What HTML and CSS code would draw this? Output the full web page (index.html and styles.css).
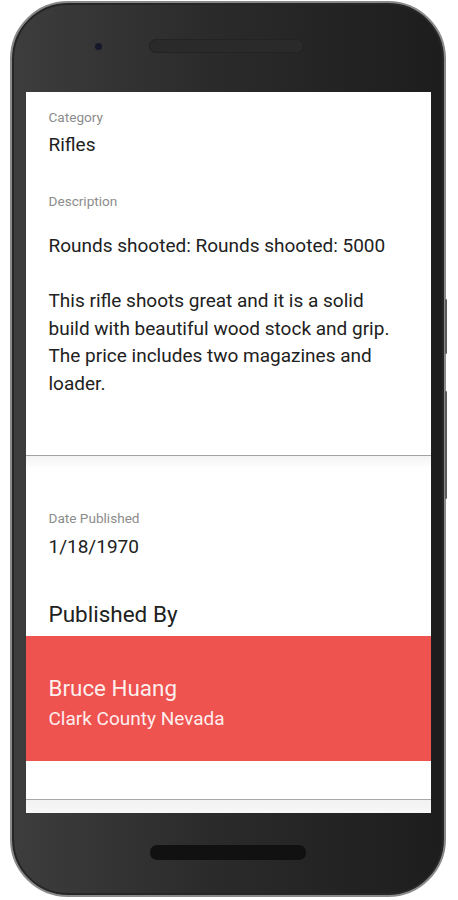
FILE: index.html
```html
<!DOCTYPE html>
<html lang="en">
<head>
    <meta charset="UTF-8">
    <meta name="viewport" content="width=device-width, initial-scale=1.0">
    <title>Listing Details</title>
    <link rel="stylesheet" href="styles.css">
</head>
<body>

    <div class="phone">
        <span class="side-key key-power"></span>
        <span class="side-key key-volume"></span>

        <div class="bezel bezel-top">
            <span class="camera"></span>
            <span class="speaker"></span>
        </div>

        <div class="screen">
            <div class="card card-details">
                <p class="label">Category</p>
                <p class="value">Rifles</p>

                <p class="label label-spaced">Description</p>
                <p class="description">Rounds shooted: Rounds shooted: 5000

This rifle shoots great and it is a solid build with beautiful wood stock and grip. The price includes two magazines and loader.</p>
            </div>

            <div class="card card-publish">
                <p class="label">Date Published</p>
                <p class="value value-date">1/18/1970</p>
                <h2 class="section-title">Published By</h2>
            </div>

            <!-- seller block -->
            <div class="seller">
                <p class="seller-name">Bruce Huang</p>
                <p class="seller-place">Clark County Nevada</p>
            </div>

            <div class="card-end"></div>
            <div class="card-next"></div>
        </div>

        <div class="bezel bezel-bottom">
            <span class="speaker speaker-bottom"></span>
        </div>
    </div>

</body>
</html>
```

FILE: styles.css
```css
body {
    margin: 0;
    background: white;
    font-family: Roboto, "Noto Sans", Arial, sans-serif;
}
p, h2 {
    margin: 0;
}

/* phone frame */
.phone {
    position: relative;
    box-sizing: border-box;
    width: 436px;
    height: 896px;
    margin: 1px 0 0 10px;
    border: 2px solid #8a8a8a;
    border-radius: 58px;
    background: linear-gradient(90deg, #3d3d3d, #2b2b2b 45%, #1d1d1d);
    box-shadow: inset 0 0 0 2px #262626;
    display: flex;
    flex-direction: column;
    align-items: center;
}
.side-key {
    position: absolute;
    right: -3px;
    width: 2px;
    background: #5c5c5c;
    border-radius: 1px;
}
.key-power {
    top: 296px;
    height: 55px;
}
.key-volume {
    top: 388px;
    height: 108px;
}
.bezel {
    width: 100%;
    display: flex;
    align-items: center;
}
.bezel-top {
    height: 89px;
    padding-left: 83px;
    box-sizing: border-box;
    gap: 47px;
    padding-bottom: 3px;
}
.camera {
    width: 7px;
    height: 7px;
    border-radius: 50%;
    background: #15172a;
}
.speaker {
    width: 155px;
    height: 14px;
    border-radius: 7px;
    background: #2a2a2a;
    box-shadow: inset 0 0 0 1px #232323;
}
.bezel-bottom {
    flex: 1;
    justify-content: center;
    padding-bottom: 4px;
    box-sizing: border-box;
}
.speaker-bottom {
    width: 156px;
    height: 15px;
    background: #111;
    box-shadow: none;
}

/* screen content */
.screen {
    width: 405px;
    height: 721px;
    background: white;
    overflow: hidden;
    color: #212121;
}
.card {
    padding: 0 23px;
}
.card-details {
    padding-top: 17px;
    padding-bottom: 58px;
    border-bottom: 1px solid #a3a3a3;
}
.label {
    font-size: 13.6px;
    line-height: 16px;
    color: #8c8c8c;
}
.label-spaced {
    margin-top: 36px;
}
.value {
    margin-top: 8px;
    font-size: 19px;
    line-height: 24px;
}
.value-date {
    margin-top: 9px;
}
.description {
    margin-top: 23px;
    font-size: 19px;
    line-height: 27.5px;
    white-space: pre-line;
    padding-right: 6px;
}
.card-publish {
    padding-top: 54px;
    padding-bottom: 8px;
    background: linear-gradient(#f3f3f3, white 13px);
}
.section-title {
    margin-top: 41px;
    font-size: 22.5px;
    line-height: 28px;
    font-weight: 400;
}
.seller {
    background: #ef5350;
    color: rgba(255, 255, 255, 0.92);
    padding: 39px 23px 31px;
}
.seller-name {
    font-size: 22.4px;
    line-height: 26px;
}
.seller-place {
    margin-top: 7px;
    font-size: 19px;
    line-height: 22px;
}
.card-end {
    height: 38px;
    border-bottom: 1px solid #a8a8a8;
}
.card-next {
    height: 20px;
    background: linear-gradient(#f2f2f2, #fafafa);
}
```
